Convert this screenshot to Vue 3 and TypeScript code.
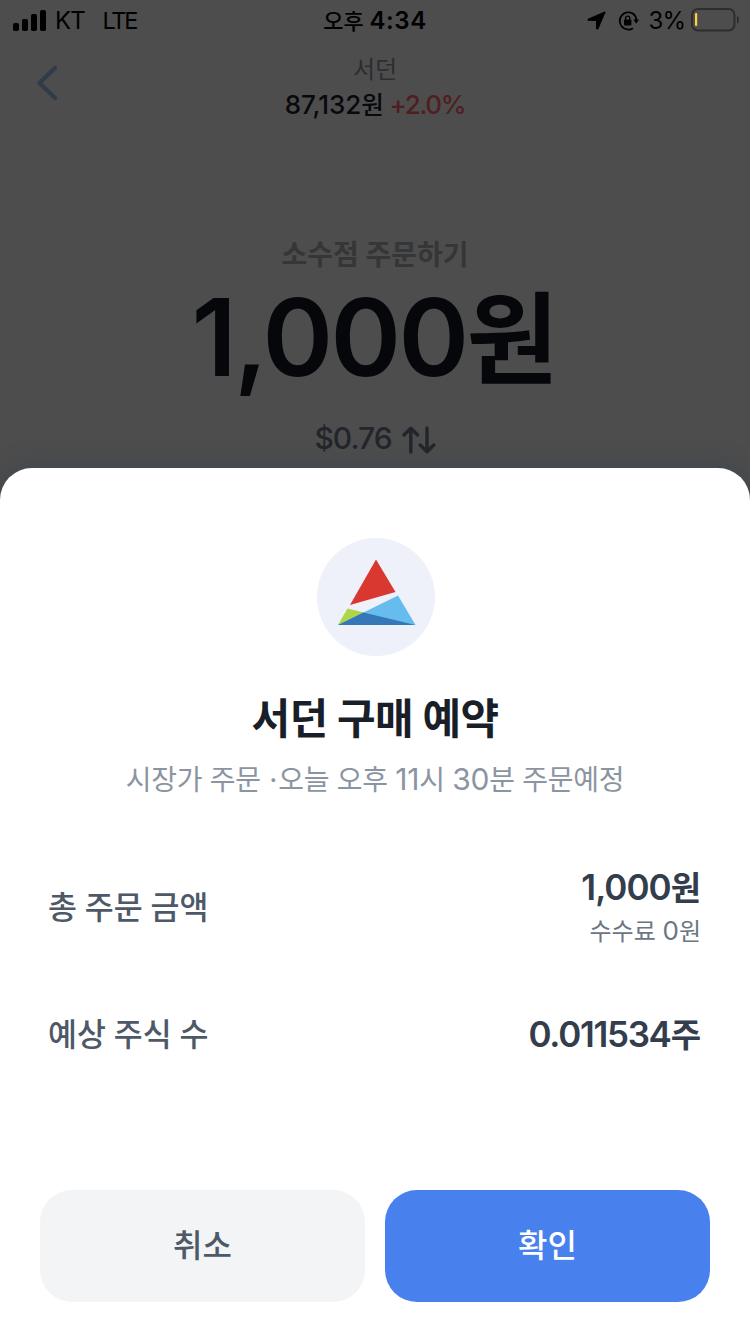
<script setup lang="ts">
interface Bar {
  x: number
  y: number
  h: number
}

const signalBars: Bar[] = [
  { x: 0, y: 13, h: 8 },
  { x: 9, y: 9, h: 12 },
  { x: 18, y: 4, h: 17 },
  { x: 27, y: 0, h: 21 },
]
</script>

<template>
  <div class="screen">
    <header class="status">
      <div class="status-left">
        <svg class="signal" width="33" height="21" viewBox="0 0 33 21">
          <rect v-for="b in signalBars" :key="b.x" :x="b.x" :y="b.y" width="6" :height="b.h" rx="1.8" />
        </svg>
        <span class="carrier">KT</span>
        <span class="network">LTE</span>
      </div>
      <div class="time">오후 <span class="num">4:34</span></div>
      <div class="status-right">
        <svg class="location" width="19" height="19" viewBox="0 0 19 19">
          <path d="M18 1 10.800 17.800 9.600 17.700V9.400L1.200 9.200V8.200z" stroke="#000" stroke-width="1.200" stroke-linejoin="round" />
        </svg>
        <svg class="lock" width="22" height="20" viewBox="0 0 22 20">
          <path d="M14.800 2.600A8.600 8.600 0 1 0 15 17.200M14.800 2.600a8.600 8.600 0 0 1 3.600 6.200" fill="none" stroke="#000" stroke-width="1.800" />
          <path d="M15.400 8.500h5.600l-2.800 4.300z" />
          <rect x="6" y="8.600" width="7.400" height="5.900" rx="1" />
          <path d="M7.600 9V7.200a2.100 2.100 0 0 1 4.200 0V9" fill="none" stroke="#000" stroke-width="1.400" />
        </svg>
        <span class="percent">3%</span>
        <svg class="battery" width="49" height="24" viewBox="0 0 49 24">
          <rect x="1" y="1" width="42.500" height="21.500" rx="6" fill="none" stroke="#2d2d2d" stroke-width="2" />
          <rect x="4" y="5" width="2.200" height="13" rx="1" fill="#ffd33c" />
          <path d="M46 8c2.700 1 2.700 6.500 0 7.500z" fill="#2d2d2d" />
        </svg>
      </div>
    </header>

    <nav class="nav">
      <svg class="back" width="24" height="38" viewBox="0 0 24 38">
        <path d="M20 4 4.500 19 20 34" fill="none" stroke="#313b4a" stroke-width="4.200" stroke-linecap="round" stroke-linejoin="round" />
      </svg>
      <div class="stock">서던</div>
      <div class="price"><span class="num">87,132</span>원 <span class="num rise">+2.0%</span></div>
    </nav>

    <main class="order">
      <div class="order-kind">소수점 주문하기</div>
      <div class="amount"><span class="num">1,000</span>원</div>
      <div class="usd">
        <span>$0.76</span>
        <svg width="34" height="28" viewBox="0 0 34 28" fill="none" stroke="#22252c" stroke-width="3.400" stroke-linecap="round" stroke-linejoin="round">
          <path d="M8.800 26V2.500M2 9l6.800-6.800L15.600 9M25 2v23.500M18.200 19l6.800 6.800 6.800-6.800" />
        </svg>
      </div>
    </main>

    <section class="sheet">
      <div class="logo">
        <svg width="78" height="68" viewBox="0 0 78 68">
          <path d="M38 .500 57.500 33 12 46z" fill="#d93831" />
          <path d="M0 66 9.500 49.500 77.500 66z" fill="#afd548" />
          <path d="M0 66 60 36.500 77.500 66z" fill="#67bcee" />
          <path d="M0 66 25.500 53.500 77.500 66z" fill="#3577b7" />
        </svg>
      </div>
      <h1 class="title">서던 구매 예약</h1>
      <p class="schedule">시장가 주문 <span class="dot">·</span>오늘 오후 <span class="num">11</span>시 <span class="num">30</span>분 주문예정</p>

      <dl class="details">
        <div class="row">
          <dt>총 주문 금액</dt>
          <dd>
            <div class="value"><span class="num">1,000</span>원</div>
            <div class="fee">수수료 <span class="num">0</span>원</div>
          </dd>
        </div>
        <div class="row">
          <dt>예상 주식 수</dt>
          <dd>
            <div class="value shares"><span class="num">0.011534</span>주</div>
          </dd>
        </div>
      </dl>

      <div class="actions">
        <button type="button" class="btn cancel">취소</button>
        <button type="button" class="btn confirm">확인</button>
      </div>
    </section>
  </div>
</template>

<style>
body {
  margin: 0;
}
</style>

<style scoped>
.screen {
  width: 750px;
  height: 1334px;
  overflow: hidden;
  display: flex;
  flex-direction: column;
  background: #4d4d4d;
  font-family: Inter, "Noto Sans CJK KR", sans-serif;
  color: #000;
}
.num {
  line-height: 0;
}
.status {
  height: 40px;
  display: grid;
  grid-template-columns: 1fr auto 1fr;
  align-items: center;
  font-size: 24px;
  line-height: 40px;
}
.status-left,
.status-right {
  display: flex;
  align-items: center;
}
.status-left {
  padding-left: 13px;
}
.signal {
  margin-bottom: 2px;
}
.carrier {
  margin-left: 9px;
  letter-spacing: -0.8px;
}
.network {
  margin-left: 17.5px;
  font-size: 23.5px;
  letter-spacing: -2.2px;
}
.time {
  font-size: 22px;
  line-height: 42px;
  font-weight: 500;
}
.time .num {
  font-size: 24px;
  font-weight: 600;
  letter-spacing: 0.6px;
}
.status-right {
  justify-content: flex-end;
  padding-right: 10px;
}
.location {
  margin-bottom: 1px;
}
.lock {
  margin-left: 12px;
}
.percent {
  margin: 0 6px 0 8.5px;
  letter-spacing: -1px;
}
.battery {
  margin-bottom: 2px;
}
.nav {
  position: relative;
  height: 195px;
  padding-top: 13px;
  box-sizing: border-box;
  text-align: center;
}
.back {
  position: absolute;
  left: 35px;
  top: 24px;
}
.stock {
  font-size: 24px;
  line-height: 34px;
  color: #2b2d31;
}
.price {
  font-size: 24.5px;
  line-height: 36px;
  font-weight: 500;
  color: #08090c;
}
.price .num {
  font-size: 26px;
}
.price .rise {
  color: #4f1e21;
  letter-spacing: -1.3px;
  margin-left: -1px;
}
.order {
  height: 233px;
  text-align: center;
}
.order-kind {
  font-size: 28px;
  line-height: 40px;
  font-weight: 700;
  color: #353638;
}
.amount {
  margin-top: 5px;
  font-size: 100px;
  line-height: 120px;
  font-weight: 700;
  color: #06070b;
}
.amount .num {
  font-size: 107px;
  font-weight: 600;
  letter-spacing: -2.6px;
}
.usd {
  margin-top: 18px;
  display: flex;
  justify-content: center;
  align-items: center;
  gap: 10px;
  font-size: 30px;
  line-height: 40px;
  font-weight: 500;
  letter-spacing: -1px;
  color: #22252c;
}
.usd svg {
  margin-top: 4px;
}
.sheet {
  flex: 1;
  display: flex;
  flex-direction: column;
  background: #fff;
  border-radius: 32px 32px 0 0;
  box-shadow: 0 0 26px rgba(45, 60, 80, 0.45);
}
.logo {
  width: 118px;
  height: 118px;
  margin: 70px 0 0 317px;
  border-radius: 50%;
  background: #eef1f9;
  display: flex;
  justify-content: center;
}
.logo svg {
  margin: 21px 0 0 2px;
}
.title {
  margin: 35px 0 0;
  font-size: 42px;
  line-height: 56px;
  font-weight: 700;
  letter-spacing: -0.6px;
  text-align: center;
  color: #191f28;
}
.schedule {
  margin: 13px 0 0;
  font-size: 28px;
  line-height: 40px;
  letter-spacing: -0.27px;
  text-align: center;
  color: #8b95a1;
}
.schedule .num {
  font-size: 30px;
}
.dot {
  margin: 0 1px;
}
.details {
  margin: 66px 49px 0 48px;
  display: flex;
  flex-direction: column;
  gap: 64px;
}
.row {
  display: flex;
  justify-content: space-between;
  align-items: center;
}
dt {
  font-size: 31.5px;
  line-height: 44px;
  font-weight: 500;
  word-spacing: -0.6px;
  color: #4e5968;
}
dd {
  margin: 0;
  text-align: right;
}
.value {
  font-size: 33px;
  line-height: 44px;
  font-weight: 700;
  color: #333d4b;
}
.value .num {
  font-size: 35px;
  font-weight: 600;
  letter-spacing: -1px;
}
.shares .num {
  letter-spacing: -1.3px;
}
.fee {
  margin-top: 4px;
  margin-bottom: -1px;
  font-size: 24px;
  line-height: 36px;
  color: #6b7684;
}
.fee .num {
  font-size: 26px;
}
.actions {
  margin: auto 40px 32px;
  display: flex;
  gap: 20px;
}
.btn {
  flex: 1;
  height: 112px;
  padding: 0;
  border: 0;
  border-radius: 32px;
  font-family: inherit;
  font-size: 32px;
  line-height: 44px;
  font-weight: 500;
}
.cancel {
  background: #f2f4f6;
  color: #4e5968;
}
.confirm {
  background: #4880ee;
  color: #fff;
}
</style>
